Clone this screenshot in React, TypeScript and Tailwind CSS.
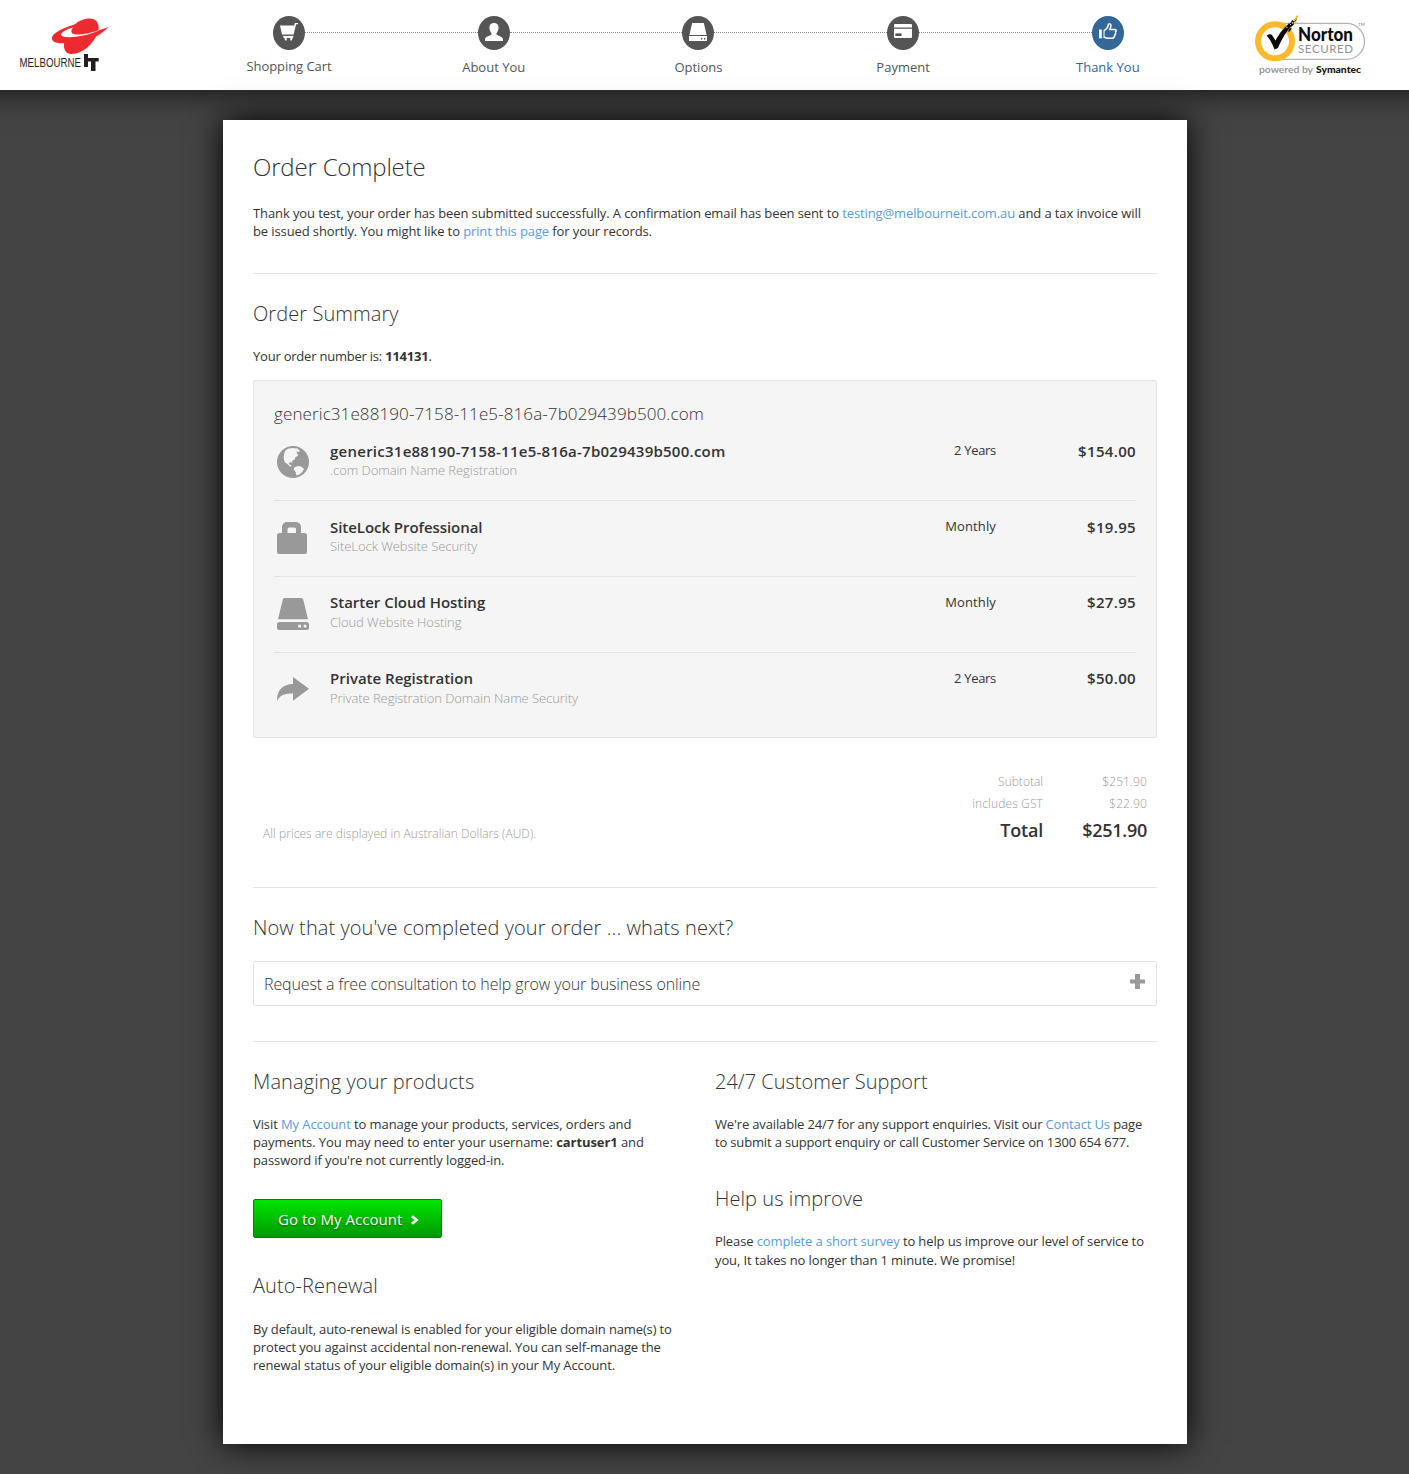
import React from "react";

const GLYPHS = {
  cart: (
    <svg width="18" height="18" viewBox="0 0 18 18" fill="#fff">
      <path d="M0 2.6h14.2L14.9 0H18v1.3h-1.9l-2.5 10.2H2L0 2.6z" />
      <path d="M2.9 12.6h10.5v.9l-.6 1.6H3.6z" />
      <path d="M4.4 15h2.3v2.6H5.2zM10.3 15h2.2l-.7 2.6h-1.5z" />
      <path d="M3 12h10.6v.8H3z" fill="#555" />
    </svg>
  ),
  user: (
    <svg width="18" height="18" viewBox="0 0 18 18" fill="#fff">
      <path d="M9 0c2.9 0 4.6 1.6 4.6 4.4 0 2.1-.8 4.1-2.1 5.6v1.6c.4 1 6.5 1.9 6.5 4.6V18H0v-1.8c0-2.7 6-3.600 6.500-4.600V10C5.200 8.500 4.400 6.500 4.400 4.400 4.400 1.600 6.100 0 9 0z" />
    </svg>
  ),
  drive: (
    <svg width="18" height="18" viewBox="0 0 18 18" fill="#fff">
      <path d="M3.200 0h11.600L17.600 12H.4zM0 13.100h18V18H0z" />
      <path d="M12 15h1.400v1.600H12zM15 15h1.400v1.600H15z" fill="#555" />
    </svg>
  ),
  card: (
    <svg width="18" height="18" viewBox="0 0 18 18" fill="#fff">
      <path d="M1 1h16a1 1 0 0 1 1 1v2.500H0V2a1 1 0 0 1 1-1zM0 5.700h18V14a1 1 0 0 1-1 1H1a1 1 0 0 1-1-1z" />
      <path d="M1.300 10.400h6.300v2.600H1.300z" fill="#555" />
    </svg>
  ),
  thumb: (
    <svg width="18" height="18" viewBox="0 0 18 18" fill="none">
      <path d="M0 6.500h2.800v8.800H0z" fill="#fff" />
      <path
        d="M5 7.700C7.500 6.300 9 4.200 9.400 1.700c.3-1.500 2.700-1 2.500.9-.1 1.500-.6 2.700-1.200 3.900h5.200c1.600 0 1.700 1.900.6 2.300.5 1.200.1 2-.5 2.300.2 1-.1 1.600-.7 2 .1 1-.7 2.200-2 2.200H9.500c-1.800 0-3-.5-4.500-1.300"
        stroke="#fff" strokeWidth="1.500" strokeLinejoin="round"
      />
      <path d="M5 7v8" stroke="#fff" strokeWidth="1" />
    </svg>
  ),
};

const STEPS = [
  { label: "Shopping Cart", icon: GLYPHS.cart },
  { label: "About You", icon: GLYPHS.user },
  { label: "Options", icon: GLYPHS.drive },
  { label: "Payment", icon: GLYPHS.card },
  { label: "Thank You", icon: GLYPHS.thumb },
];

function MelbourneLogo() {
  return (
    <svg width="96" height="60" viewBox="16 15 96 60" className="ml-4 mt-[15px] shrink-0">
      <path
        fill="#ed2a30"
        d="M108.500 26.900C104 31.600 99.500 34.500 96 36.500 92.600 43 84 53.900 71.500 53.900c-5.500 0-8.300-4.500-7.400-10.700C57 43.600 52 42.300 52 38.300c0-5.800 14.500-11.300 23-14C79 20.500 85 18.500 90 18.500c5.500 0 9.600 4 8.600 11.800 3.500-1 6.900-2.300 9.900-3.400z"
      />
      <path
        fill="#fff"
        d="M73.300 27.300C66 29.500 60 33 61.300 35.300c2 3.400 21 2.400 37.900-4.800l-1.200-.2c-7 3-17 4.600-22 4.200-5-.4-6-3.500-2.700-7.200z"
      />
      <text x="19.500" y="67" fontFamily="'Liberation Sans', sans-serif" fontSize="12.600" textLength="61.500" lengthAdjust="spacingAndGlyphs" fill="#231f20">
        MELBOURNE
      </text>
      <path fill="#231f20" d="M84 54h4v13h-4zM88 58h10.700v3.500h-3.200V71H91v-9.500h-3z" />
    </svg>
  );
}

function NortonLogo() {
  return (
    <svg width="116" height="66" viewBox="1252 12 116 66" className="ml-auto mr-[41px] mt-3 shrink-0">
      <path d="M1275 23.400h71.500a18 18 0 0 1 0 36H1275" fill="#fff" stroke="#b5b5b5" strokeWidth="1.300" />
      <circle cx="1275" cy="41.300" r="17" fill="#fff" stroke="#fdb92a" strokeWidth="6" />
      <path d="M1266.500 35.800c2.500-1.600 4-1.900 5.500-.8l3.500 5.500c4-7.500 8-12 14-17.500l3 1.500c-6 7-10.500 14-14.500 23.500l-3.500 1.500c-2-5.500-4.500-10.500-8-13.700z" fill="#0b0b0b" />
      <path d="M1288 24l3-1.500 1-2.500 2 1 1-2.500 2.200-.5-1.200 3-2.500 1.500.5 2-3.500 3zM1288 31l2-3 2 .5-3 3.500z" fill="#0b0b0b" />
      <path d="M1293 20.500l2.500-2 .5-2.500 2-1v2l-1.500 2-2 2.500zM1294.500 22l2-.5.2 1.800-1.500.5z" fill="#fdb92a" />
      <path d="M1286 27l1.500.5M1289.500 23.500l1.500 1.500M1292 22l1 2" stroke="#fff" strokeWidth=".8" />
      <text x="1298" y="40.500" fontFamily="Lato, sans-serif" fontWeight="900" fontSize="18.500" textLength="55" lengthAdjust="spacingAndGlyphs" fill="#0b0b0b">Norton</text>
      <text x="1298" y="53" fontFamily="Lato, sans-serif" fontSize="11.500" textLength="55" lengthAdjust="spacing" fill="#929292">SECURED</text>
      <text x="1358" y="25.500" fontFamily="Lato, sans-serif" fontSize="4.500" fill="#777">TM</text>
      <text x="1259" y="73" fontFamily="Lato, sans-serif" fontWeight="600" fontSize="8.700" textLength="54" lengthAdjust="spacingAndGlyphs" fill="#909090">powered by</text>
      <text x="1316" y="73" fontFamily="Lato, sans-serif" fontWeight="900" fontSize="8.700" textLength="45" lengthAdjust="spacingAndGlyphs" fill="#151515">Symantec</text>
    </svg>
  );
}

const ITEMS = [
  {
    name: "generic31e88190-7158-11e5-816a-7b029439b500.com",
    nameClass: "tracking-[0.250px]",
    detail: ".com Domain Name Registration",
    term: "2 Years",
    termClass: "tracking-[-0.300px]",
    price: "$154.00",
    icon: (
      <>
        <circle cx="16" cy="16" r="16" fill="#999" />
        <path
          d="M8.500 4.500C10.500 2.600 13.500 1.900 16.500 2l2 .6 1.500-.3 2 1.500.8 1.700-1.300.5-2.200-.6.900 2.300 1.300 1-1.700 1.700-1.500.8-.7 2.300-2.600 1.600.5 2-2.200-1.200-1.500 1.600.8 1.200 1.700.3-.2 1.700-1.500-.5-2.300-2.200-2.300-1.500C6.500 13.500 6 8.500 8.500 4.500zM17.500 21.300l3.500-1.300 3.200.6 2.900 2.400-2 3.300-3.600 2.700-2.200.3-.6-3.200-2.100-2.500z"
          fill="#f5f5f5"
        />
      </>
    ),
  },
  {
    name: "SiteLock Professional",
    nameClass: "tracking-[-0.050px]",
    detail: "SiteLock Website Security",
    term: "Monthly",
    termClass: "tracking-[0.120px]",
    price: "$19.95",
    icon: (
      <path
        fillRule="evenodd"
        fill="#999"
        d="M5 11V5a5 5 0 0 1 5-5h9a5 5 0 0 1 5 5v6h3.500A2.500 2.500 0 0 1 30 13.500v16a2.500 2.500 0 0 1-2.500 2.500h-25A2.500 2.500 0 0 1 0 29.500v-16A2.500 2.500 0 0 1 2.500 11zM10.500 11H19V7a1.500 1.500 0 0 0-1.500-1.500H12A1.500 1.500 0 0 0 10.500 7z"
      />
    ),
  },
  {
    name: "Starter Cloud Hosting",
    nameClass: "-mt-px mb-px tracking-[-0.020px]",
    detail: "Cloud Website Hosting",
    term: "Monthly",
    termClass: "tracking-[0.120px]",
    price: "$27.95",
    icon: (
      <>
        <path fill="#999" d="M7.500 0h17q1.300 0 1.700 1.500L31 21.200H1L5.800 1.500Q6.200 0 7.500 0zM2.500 24h27a2.500 2.500 0 0 1 2.500 2.500v3a2.500 2.500 0 0 1-2.500 2.500h-27A2.500 2.500 0 0 1 0 29.500v-3A2.500 2.500 0 0 1 2.500 24z" />
        <path fill="#f5f5f5" d="M21.300 26.700h2.700v2.700h-2.700zM26.700 26.700h2.700v2.700h-2.700z" />
      </>
    ),
  },
  {
    name: "Private Registration",
    nameClass: "-mt-px mb-px",
    detail: "Private Registration Domain Name Security",
    term: "2 Years",
    termClass: "tracking-[-0.300px]",
    price: "$50.00",
    icon: <path fill="#999" d="M16 3l16 11.800L16 26.800v-7.300C8.500 19.500 3 20.500.3 27-.8 17.500 5 10 16 9.900z" />,
  },
];

function Rule({ className }: { className: string }) {
  return <div className={`h-px bg-[#e3e3e3] ${className}`} />;
}

function H2({ children, className }: { children: React.ReactNode; className: string }) {
  return <h2 className={`h-7 whitespace-nowrap text-[20px] font-light leading-7 ${className}`}>{children}</h2>;
}

function Line({ children, className }: { children: React.ReactNode; className: string }) {
  return <span className={`block whitespace-nowrap ${className}`}>{children}</span>;
}

function A({ children }: { children: React.ReactNode }) {
  return <a href="#" className="text-[#5b9bd9]">{children}</a>;
}

export default function App() {
  return (
    <div className="h-[1474px] overflow-hidden bg-[#444] font-['Open_Sans',sans-serif] text-[13px] leading-[18.2px] text-[#333]">
      <header className="flex h-[90px] bg-white shadow-[0_-40px_30px_40px_rgba(0,0,0,0.8)]">
        <MelbourneLogo />
        <nav className="ml-[161px] mt-4 flex w-[850.800px] shrink-0">
          {STEPS.map((s, i) => {
            const current = i === STEPS.length - 1;
            return (
              <React.Fragment key={s.label}>
                {i > 0 && <div className="mt-4 h-px flex-1 border-t border-dotted border-[#888]" />}
                <div className="flex w-8 shrink-0 flex-col items-center">
                  <div className={`flex h-[34px] w-8 justify-center rounded-[50%] pt-[7px] ${current ? "bg-[#336699]" : "bg-[#555]"}`}>{s.icon}</div>
                  <span className={`${i === 0 ? "mt-[7px] tracking-[-0.070px]" : "mt-2"} whitespace-nowrap ${current ? "text-[#336699]" : "text-[#555]"}`}>{s.label}</span>
                </div>
              </React.Fragment>
            );
          })}
        </nav>
        <NortonLogo />
      </header>

      <main className="ml-[223px] mt-[30px] h-[1324px] w-[964px] bg-white px-[30px] pt-[30px] shadow-[0_0_30px_#000]">
        <h1 className="h-[34px] text-[24px] font-light leading-[34px] tracking-[-0.180px]">Order Complete</h1>
        <p className="mt-5 tracking-[-0.108px]">
          Thank you test, your order has been submitted successfully. A confirmation email has been sent to <A>testing@melbourneit.com.au</A> and a tax invoice will
          <br />
          be issued shortly. You might like to <A>print this page</A> for your records.
        </p>
        <Rule className="mt-[32.600px]" />

        <H2 className="mt-[26px] tracking-[0.080px]">Order Summary</H2>
        <p className="mt-[19px] h-[18px] tracking-[-0.220px]">Your order number is: <b>114131</b>.</p>

        <section className="mt-[15px] h-[358px] rounded-[2px] border border-[#e3e3e3] bg-[#f5f5f5] px-5 pt-[21px]">
          <h3 className="h-6 text-[17px] font-light leading-6 tracking-[0.104px]">generic31e88190-7158-11e5-816a-7b029439b500.com</h3>
          {ITEMS.map((it, i) => (
            <div key={it.name} className={`flex h-[76px] ${i === 0 ? "-mt-[2px] pt-[17px]" : "border-t border-[#e3e3e3] pt-4"}`}>
              <svg width="32" height="32" viewBox="0 0 32 32" className="ml-[3px] mt-[5px] shrink-0">{it.icon}</svg>
              <div className="ml-[21px] flex-1">
                <div className={`h-5 text-[15px] font-semibold leading-[21px] ${it.nameClass}`}>{it.name}</div>
                <div className="font-light leading-[19px] tracking-[-0.050px] text-[#999]">{it.detail}</div>
              </div>
              <div className={`leading-[19px] ${it.termClass}`}>{it.term}</div>
              <div className={`w-[140px] text-right text-[15px] font-semibold leading-[21px] tracking-[0.330px] ${i > 1 ? "-mt-px" : ""}`}>{it.price}</div>
            </div>
          ))}
        </section>

        <div className="mt-[33px] flex h-[78px] items-end justify-between px-[10px] text-[12px] font-light text-[#999]">
          <p className="mb-[6px] leading-[18px] tracking-[0.055px]">All prices are displayed in Australian Dollars (AUD).</p>
          <div className="grid h-full grid-cols-[1fr_104px] grid-rows-[22px_21px_32px] text-right leading-[22px]">
            <span>Subtotal</span><span className="tracking-[0.120px]">$251.90</span>
            <span className="tracking-[0.130px]">includes GST</span><span className="tracking-[0.120px]">$22.90</span>
            <span className="text-[18px] font-semibold leading-[33px] tracking-[-0.200px] text-[#333]">Total</span>
            <span className="text-[18px] font-semibold leading-[33px] tracking-[-0.280px] text-[#333]">$251.90</span>
          </div>
        </div>
        <Rule className="mt-[38px]" />

        <H2 className="mt-[26px] tracking-[0.077px]">Now that you've completed your order ... whats next?</H2>
        <div className="mt-[19px] flex h-[45px] items-center justify-between rounded-[2px] border border-[#e3e3e3] pl-[10px] pr-[11px]">
          <span className="text-[16px] font-light leading-6 tracking-[-0.120px]">Request a free consultation to help grow your business online</span>
          <svg width="15" height="15" viewBox="0 0 15 15" className="mb-1"><path fill="#999" d="M5 0h5v5.500h5v4h-5V15H5V9.500H0v-4h5z" /></svg>
        </div>
        <Rule className="mt-[35px]" />

        <div className="mt-[26px] grid grid-cols-[462px_442px]">
          <div>
            <H2 className="tracking-[0.110px]">Managing your products</H2>
            <p className="mt-[19px]">
              <Line className="tracking-[-0.090px]">Visit <A>My Account</A> to manage your products, services, orders and</Line>
              <Line className="tracking-[-0.080px]">payments. You may need to enter your username: <b>cartuser1</b> and</Line>
              <Line className="tracking-[-0.090px]">password if you're not currently logged-in.</Line>
            </p>
            <button className="mt-[29.400px] flex h-[39px] w-[189px] items-center rounded-[2px] border border-[#00820a] bg-gradient-to-b from-[#00e600] to-[#009900] pl-6 pt-0.5 text-[15px] tracking-[0.050px] text-white [text-shadow:0_1px_2px_rgba(0,0,0,0.5)]">
              Go to My Account
              <svg width="8" height="10" viewBox="0 0 8 10" className="ml-[9px]"><path d="M1 1.200l4.500 3.800L1 8.800" fill="none" stroke="#fff" strokeWidth="2.800" /></svg>
            </button>
            <H2 className="mt-[34px] tracking-[0.080px]">Auto-Renewal</H2>
            <p className="mt-5">
              <Line className="tracking-[-0.138px]">By default, auto-renewal is enabled for your eligible domain name(s) to</Line>
              <Line className="tracking-[-0.130px]">protect you against accidental non-renewal. You can self-manage the</Line>
              <Line className="tracking-[-0.097px]">renewal status of your eligible domain(s) in your My Account.</Line>
            </p>
          </div>
          <div>
            <H2 className="tracking-normal">24/7 Customer Support</H2>
            <p className="mt-[19px]">
              <Line className="tracking-[-0.142px]">We're available 24/7 for any support enquiries. Visit our <A>Contact Us</A> page</Line>
              <Line className="tracking-[-0.165px]">to submit a support enquiry or call Customer Service on 1300 654 677.</Line>
            </p>
            <H2 className="mt-[33.600px] tracking-[0.070px]">Help us improve</H2>
            <p className="mt-[19.400px]">
              <Line className="tracking-[-0.117px]">Please <A>complete a short survey</A> to help us improve our level of service to</Line>
              <Line className="tracking-[-0.110px]">you, It takes no longer than 1 minute. We promise!</Line>
            </p>
          </div>
        </div>
      </main>
    </div>
  );
}
